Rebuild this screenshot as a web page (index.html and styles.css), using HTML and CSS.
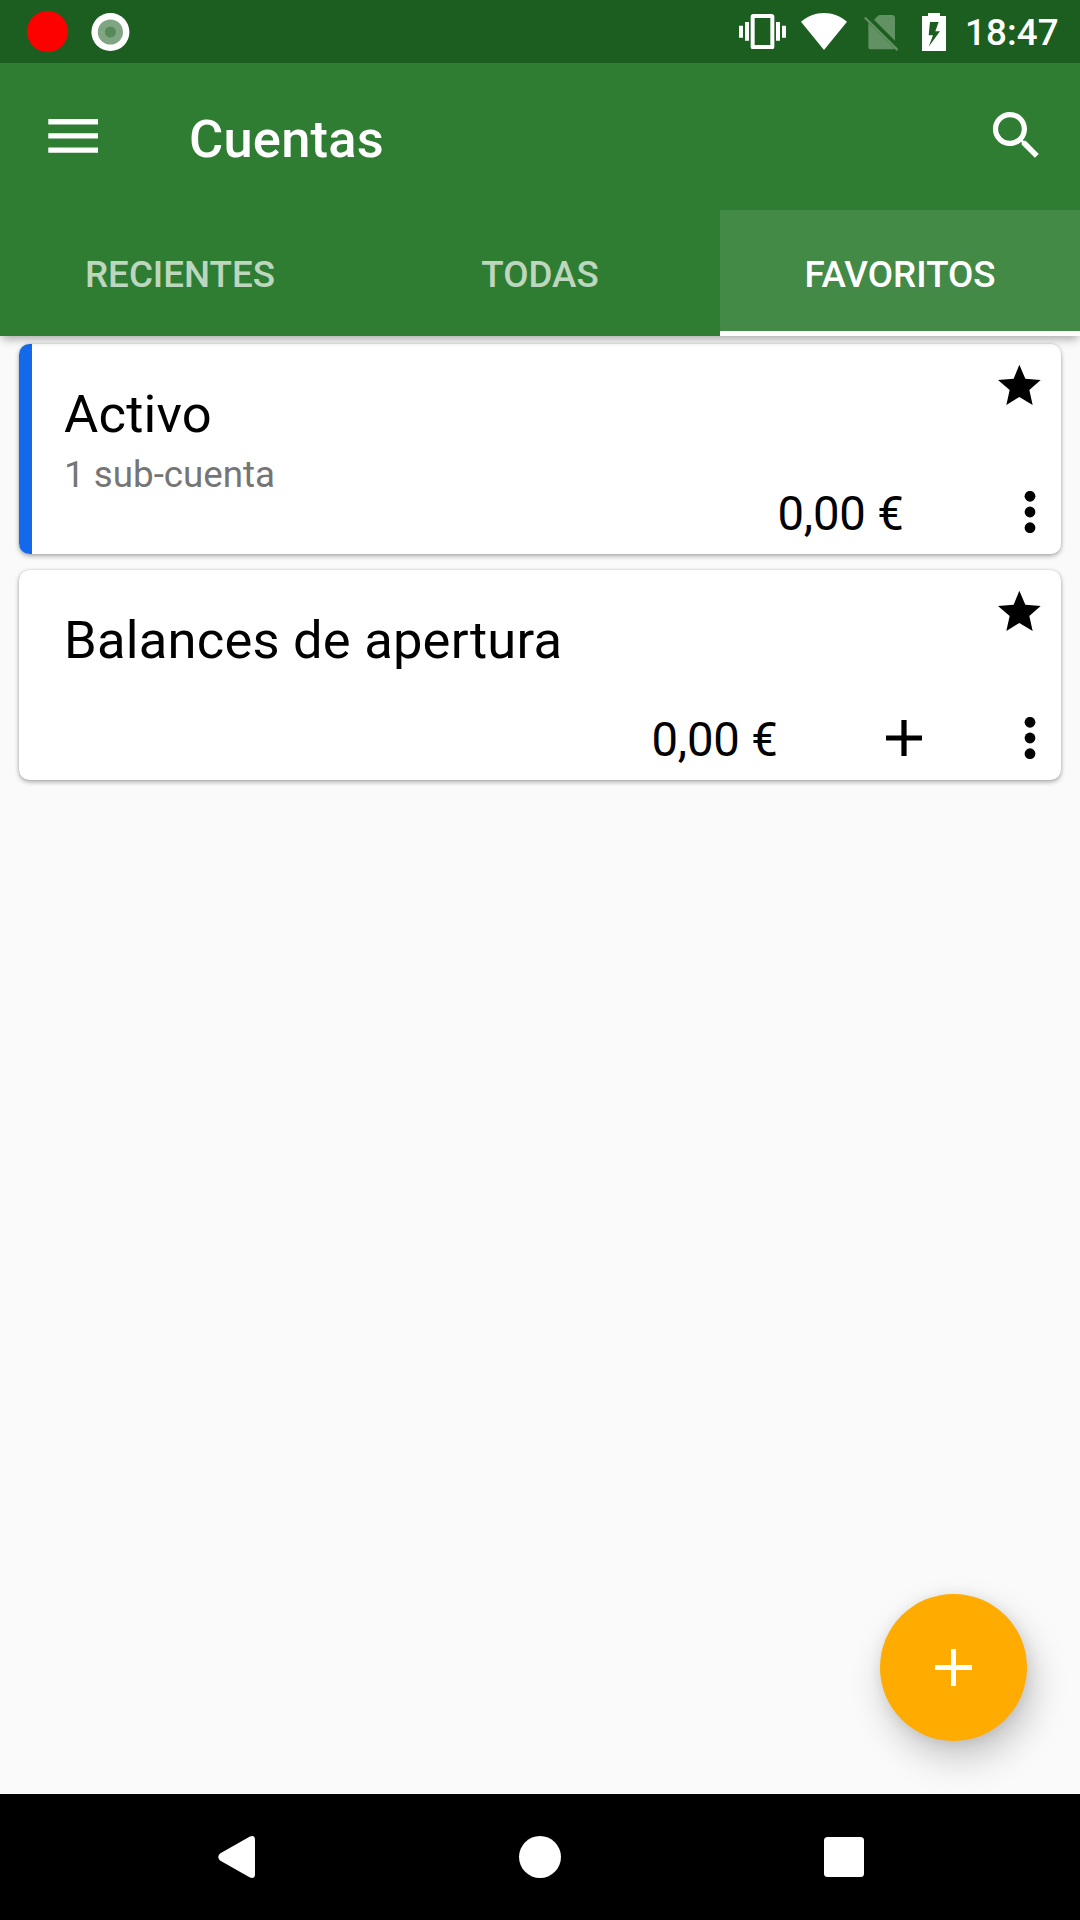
FILE: index.html
```html
<!DOCTYPE html>
<html lang="es">
<head>
<meta charset="utf-8">
<title>Cuentas</title>
<link rel="stylesheet" href="styles.css">
</head>
<body>
<div class="screen">
  <div class="status-bar">
    <svg class="icon-record" width="41" height="41" viewBox="0 0 41 41"><circle cx="20.5" cy="20.5" r="20.5" fill="#f00"/></svg>
    <svg class="icon-disc" width="39" height="38" viewBox="0 0 39 38"><circle cx="19.4" cy="19" r="19" fill="#fff"/><circle cx="19.4" cy="19" r="12.6" fill="#80a582"/><circle cx="19.4" cy="19" r="5.6" fill="#578a59"/></svg>
    <svg class="icon-vibrate" width="47" height="35" viewBox="0 0 141 105" fill="#fff"><path d="M0 35h12v36H0zM18 24h12v56H18zM111 24h12v56h-12zM129 35h12v36h-12z"/><path fill-rule="evenodd" d="M43 0h55a8 8 0 0 1 8 8v90a8 8 0 0 1-8 8H43a8 8 0 0 1-8-8V8a8 8 0 0 1 8-8zM47 12v81h47V12z"/></svg>
    <svg class="icon-wifi" width="46" height="37" viewBox="0 0 138 111"><path d="M69 111L0 26C20 9 43 0 69 0s49 9 69 26z" fill="#fff"/></svg>
    <svg class="icon-sim" width="35" height="37" viewBox="0 0 105 111" fill="#629164"><path d="M30 17L42 5Q45 3 48 3H84Q93 3 93 12V80zM13 26L92 105Q90 106 86 106H21Q13 106 13 98z"/><path d="M0 13l5-5 98 97-5 6z"/></svg>
    <svg class="icon-battery" width="24" height="38" viewBox="0 0 72 114"><path fill="#fff" fill-rule="evenodd" d="M18 0h36v9h18v105H0V9h18zM24 27L20 67h13L20 101 54 55H40L50 27z"/></svg>
    <span class="clock">18:47</span>
  </div>
  <header class="app-bar">
    <div class="toolbar">
      <svg class="icon-menu" width="50" height="34" viewBox="0 0 50 34" fill="#fff"><path d="M.3 0H50v5.4H.3zM.3 14.2H50v5.4H.3zM.3 28.4H50v5.4H.3z"/></svg>
      <h1 class="title">Cuentas</h1>
      <svg class="icon-search" width="63" height="63" viewBox="0 0 24 24"><path fill="#fff" d="M15.5 14h-.79l-.28-.27C15.41 12.59 16 11.11 16 9.5 16 5.91 13.09 3 9.5 3S3 5.91 3 9.5 5.91 16 9.5 16c1.61 0 3.09-.59 4.23-1.57l.27.28v.79l5 4.99L20.49 19l-4.99-5zm-6 0C7.01 14 5 11.99 5 9.5S7.01 5 9.5 5 14 7.01 14 9.5 11.99 14 9.5 14z"/></svg>
    </div>
    <nav class="tabs">
      <div class="tab">RECIENTES</div>
      <div class="tab">TODAS</div>
      <div class="tab tab-active">FAVORITOS</div>
    </nav>
  </header>
  <main class="content">
    <article class="card card-blue">
      <div class="info">
        <h2 class="name">Activo</h2>
        <p class="detail">1 sub-cuenta</p>
      </div>
      <div class="side">
        <svg class="star" width="43" height="41" viewBox="0 0 129 123"><path d="M64 2L82 44 128 48 94 78 104 123 64 99 25 123 35 78 0 48 47 44z"/></svg>
        <div class="actions">
          <span class="amount">0,00 €</span>
          <svg class="more" width="12" height="42" viewBox="0 0 12 42"><circle cx="6" cy="5.3" r="5.4"/><circle cx="6" cy="21" r="5.4"/><circle cx="6" cy="36.7" r="5.4"/></svg>
        </div>
      </div>
    </article>
    <article class="card">
      <div class="info">
        <h2 class="name">Balances de apertura</h2>
      </div>
      <div class="side">
        <svg class="star" width="43" height="41" viewBox="0 0 129 123"><path d="M64 2L82 44 128 48 94 78 104 123 64 99 25 123 35 78 0 48 47 44z"/></svg>
        <div class="actions">
          <span class="amount">0,00 €</span>
          <svg class="add" width="36" height="36" viewBox="0 0 36 36"><path d="M15.4 0h5.2v15.4H36v5.2H20.6V36h-5.2V20.6H0v-5.2h15.4z"/></svg>
          <svg class="more" width="12" height="42" viewBox="0 0 12 42"><circle cx="6" cy="5.3" r="5.4"/><circle cx="6" cy="21" r="5.4"/><circle cx="6" cy="36.7" r="5.4"/></svg>
        </div>
      </div>
    </article>
    <div class="fab">
      <svg width="37" height="37" viewBox="0 0 37 37"><path fill="#fff" d="M16 0h5v16h16v5H21v16h-5V21H0v-5h16z"/></svg>
    </div>
  </main>
  <footer class="nav-bar">
    <svg width="37" height="42" viewBox="0 0 37 42"><path fill="#fff" d="M2 17.5L31.5.8Q37-1.5 37 4V38Q37 43.5 31.5 41.2L2 24.5Q-1.5 21 2 17.5z"/></svg>
    <svg class="home" width="42" height="42" viewBox="0 0 42 42"><circle cx="21" cy="21" r="21" fill="#fff"/></svg>
    <svg width="40" height="40" viewBox="0 0 40 40"><rect width="40" height="40" rx="3.5" fill="#fff"/></svg>
  </footer>
</div>
</body>
</html>
```
FILE: styles.css
```css
* { box-sizing: border-box; }

body {
  margin: 0;
  font-family: Roboto, "Liberation Sans", sans-serif;
}

svg { display: block; flex: none; }
h1, h2, p { margin: 0; }

.screen {
  width: 1080px;
  height: 1920px;
  display: flex;
  flex-direction: column;
  background: #fafafa;
  overflow: hidden;
}

.status-bar {
  height: 63px;
  flex: none;
  display: flex;
  align-items: center;
  padding: 0 21px 0 27px;
  background: #1b5e20;
}
.icon-disc { margin-left: 23px; }
.icon-vibrate { margin-left: auto; }
.icon-wifi { margin-left: 15px; }
.icon-sim { margin: 2px 0 0 17px; }
.icon-battery { margin-left: 23px; }
.clock {
  width: 94px;
  margin: 3px 0 0 19px;
  font-size: 36.75px;
  font-weight: 500;
  line-height: 44px;
  letter-spacing: .1px;
  color: #fff;
  white-space: nowrap;
}

.app-bar {
  position: relative;
  z-index: 1;
  flex: none;
  background: #2e7d32;
  box-shadow: 0 5px 9px -2px rgba(0, 0, 0, .33);
}
.toolbar {
  height: 147px;
  display: flex;
  align-items: center;
  padding: 0 32px 2px 48px;
}
.title {
  flex: 1;
  margin: 6px 0 0 91px;
  font-size: 52.5px;
  font-weight: 500;
  line-height: 60px;
  letter-spacing: .2px;
  color: #fff;
}
.tabs { display: flex; height: 126px; }
.tab {
  flex: 1;
  display: flex;
  align-items: center;
  justify-content: center;
  padding-top: 2px;
  font-size: 36.75px;
  font-weight: 500;
  color: rgba(255, 255, 255, .7);
}
.tab-active {
  color: #fff;
  background: #438a46;
  box-shadow: inset 0 -5px #fff;
}

.content {
  flex: 1;
  position: relative;
  padding: 8px 19px;
  display: flex;
  flex-direction: column;
  gap: 16px;
}
.card {
  height: 210px;
  display: flex;
  justify-content: space-between;
  padding-left: 45px;
  border-radius: 10.5px;
  background: #fff;
  box-shadow: 0 2px 5px rgba(0, 0, 0, .32), 0 0 2px rgba(0, 0, 0, .16);
}
.card-blue { background: linear-gradient(to right, #1468eb 13px, #fff 13px); }
.info { padding-top: 40px; }
.name {
  font-size: 52.5px;
  font-weight: 400;
  line-height: 60px;
  letter-spacing: .22px;
  color: #000;
}
.detail {
  margin-top: 9px;
  font-size: 36.75px;
  line-height: 44px;
  color: #757575;
}
.side {
  display: flex;
  flex-direction: column;
  align-items: flex-end;
  justify-content: space-between;
  padding: 20px 20px 14px 0;
}
.actions {
  display: flex;
  align-items: center;
  height: 56px;
  padding-right: 5px;
}
.amount {
  margin-top: 4px;
  font-size: 47.25px;
  line-height: 56px;
  letter-spacing: -.2px;
  color: #000;
}
.more { margin-left: 120.5px; }
.add { margin-left: 108.5px; }
.add + .more { margin-left: 102px; }

.fab {
  position: absolute;
  right: 53px;
  bottom: 53px;
  width: 147px;
  height: 147px;
  display: flex;
  align-items: center;
  justify-content: center;
  border-radius: 50%;
  background: #ffab00;
  box-shadow: 6px 17px 36px rgba(0, 0, 0, .21), 1px 2px 14px rgba(0, 0, 0, .09);
}

.nav-bar {
  height: 126px;
  flex: none;
  display: flex;
  align-items: center;
  justify-content: space-between;
  padding: 0 216px 0 217.5px;
  background: #000;
}
.home { margin-left: 2px; }
```
